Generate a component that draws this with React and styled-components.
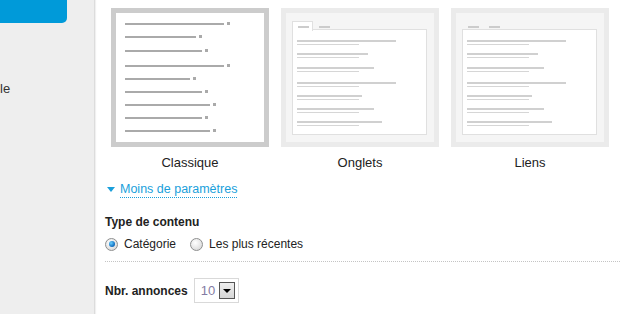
import styled, { createGlobalStyle } from "styled-components";

const Global = createGlobalStyle`
  html, body { margin: 0; padding: 0; background: #fff; }
  body { font-family: "Liberation Sans", Arial, sans-serif; font-size: 13px; color: #222; }
`

const Page = styled.div`
  display: flex;
  width: 620px;
  height: 314px;
  overflow: hidden;
`

const Sidebar = styled.aside`
  width: 94px;
  flex-shrink: 0;
  background: #eeeeee;
  border-right: 1px solid #dcdcdc;
  box-shadow: 1px 0 1px rgba(0, 0, 0, 0.06);
  display: flex;
  flex-direction: column;
`

const BlueButton = styled.div`
  width: 67px;
  height: 23px;
  background: #009ad9;
  border-radius: 0 0 5px 0;
`

const SideItem = styled.div`
  margin-top: 58px;
  line-height: 16px;
  font-size: 13px;
  color: #333;
`

const Main = styled.main`
  flex: 1;
  padding: 8px 0 0 10px;
`

const Layouts = styled.div`
  display: flex;
  gap: 12px;
  margin-left: 6px;
`

const Choice = styled.div`
  display: flex;
  flex-direction: column;
  align-items: center;
  width: 158px;
`

const Label = styled.div`
  margin-top: 8px;
  line-height: 16px;
`

const ClassicBox = styled.div`
  box-sizing: border-box;
  width: 158px;
  height: 139px;
  border: 5px solid #cccccc;
  background: #fff;
  padding: 9px 0 0 9px;
  display: flex;
  flex-direction: column;
`

const ClassicRow = styled.div`
  display: flex;
  align-items: center;
  gap: 3px;
  height: 3px;
  margin-top: ${p => p.$top}px;
`

const Bar = styled.span`
  display: block;
  height: ${p => p.$h || 2}px;
  width: ${p => p.$w}px;
  background: ${p => p.$c || "#aaaaaa"};
`

const Dot = styled.span`
  display: block;
  width: 3px;
  height: 3px;
  background: #aaaaaa;
`

const SoftBox = styled.div`
  box-sizing: border-box;
  width: 158px;
  height: 139px;
  border: 5px solid #ebebeb;
  background: #f5f5f5;
  padding: 8px 7px 7px 6px;
  display: flex;
  flex-direction: column;
`

const Tabs = styled.div`
  display: flex;
  height: 9px;
  margin-bottom: -1px;
  position: relative;
`

const Tab = styled.div`
  box-sizing: border-box;
  width: 21px;
  height: 10px;
  padding: 4px 0 0 5px;
  background: ${p => (p.$active ? "#fff" : "transparent")};
  border: 1px solid ${p => (p.$active ? "#e0e0e0" : "transparent")};
  border-bottom: none;
`

const Panel = styled.div`
  flex: 1;
  background: #fff;
  border: 1px solid #e0e0e0;
  padding: 10px 0 0 4px;
  display: flex;
  flex-direction: column;
`

const Item = styled.div`
  display: flex;
  flex-direction: column;
  gap: 2px;
  margin-top: ${p => p.$top}px;
`

const Options = styled.div`
  margin-top: 10px;
  display: flex;
  flex-direction: column;
  font-size: 12px;
`

const Toggle = styled.a`
  display: flex;
  align-items: center;
  gap: 5px;
  align-self: flex-start;
  margin-left: 2px;
  color: #1a9fdb;
  text-decoration: none;
  line-height: 16px;
  font-size: 12.5px;
  cursor: pointer;
  span {
    border-bottom: 1px dotted #1a9fdb;
  }
`

const Caret = styled.i`
  width: 0;
  height: 0;
  border-left: 4px solid transparent;
  border-right: 4px solid transparent;
  border-top: 5px solid #1a9fdb;
`

const Section = styled.div`
  margin-top: 16px;
  padding-bottom: 9px;
  border-bottom: 1px dotted #c4c4c4;
`

const Title = styled.div`
  font-weight: bold;
  line-height: 16px;
`

const RadioRow = styled.div`
  display: flex;
  align-items: center;
  gap: 14px;
  margin-top: 6px;
`

const RadioLabel = styled.label`
  display: flex;
  align-items: center;
  gap: 6px;
  line-height: 16px;
`

const Radio = styled.span`
  box-sizing: border-box;
  width: 13px;
  height: 13px;
  border-radius: 50%;
  border: 1px solid #8e8f8f;
  background: radial-gradient(circle at 40% 35%, #ffffff 0%, #e6e6e6 55%, #cfcfcf 100%);
  display: flex;
  align-items: center;
  justify-content: center;
  &::after {
    content: "";
    display: ${p => (p.$checked ? "block" : "none")};
    width: 6px;
    height: 6px;
    border-radius: 50%;
    background: radial-gradient(circle at 35% 35%, #6ad0ff 0%, #1877c6 60%, #0b4f95 100%);
  }
`

const Row = styled.div`
  display: flex;
  align-items: center;
  gap: 6px;
  margin-top: 16px;
  padding-bottom: 11px;
  border-bottom: 1px dotted #c4c4c4;
`

const Select = styled.div`
  box-sizing: border-box;
  width: 45px;
  height: 25px;
  border: 1px solid #d9d9d9;
  display: flex;
  align-items: center;
  justify-content: space-between;
  padding: 0 3px 0 6px;
  font-size: 13px;
  color: #837ba3;
`

const SelectBtn = styled.span`
  box-sizing: border-box;
  width: 16px;
  height: 17px;
  border: 1px solid #555;
  background: linear-gradient(#eeeeee, #d6d6d6);
  display: flex;
  align-items: center;
  justify-content: center;
  &::after {
    content: "";
    border-left: 4px solid transparent;
    border-right: 4px solid transparent;
    border-top: 4px solid #000;
  }
`

const classicRows = [
  { w: 99, top: 0 }, { w: 71, top: 10 }, { w: 77, top: 11 },
  { w: 99, top: 12 }, { w: 65, top: 10 }, { w: 77, top: 10 },
  { w: 85, top: 10 }, { w: 77, top: 10 }, { w: 85, top: 10 },
]

const items = [
  { w: 99, top: 0 }, { w: 71, top: 8 }, { w: 77, top: 9 },
  { w: 99, top: 10 }, { w: 65, top: 8 }, { w: 77, top: 8 }, { w: 85, top: 8 },
]

const SoftThumb = ({ tabbed }) => (
  <SoftBox>
    <Tabs>
      <Tab $active={tabbed}><Bar $w={11} $c="#cccccc" /></Tab>
      <Tab><Bar $w={11} $c="#cccccc" /></Tab>
    </Tabs>
    <Panel>
      {items.map((it, i) => (
        <Item key={i} $top={it.top}>
          <Bar $w={it.w} $c="#d0d0d0" />
          <Bar $w={62} $h={1} $c="#d6d6d6" />
        </Item>
      ))}
    </Panel>
  </SoftBox>
)

export default function App() {
  return (
    <>
      <Global />
      <Page>
        <Sidebar>
          <BlueButton />
          <SideItem>le</SideItem>
        </Sidebar>
        <Main>
          <Layouts>
            <Choice>
              <ClassicBox>
                {classicRows.map((r, i) => (
                  <ClassicRow key={i} $top={r.top}>
                    <Bar $w={r.w} />
                    <Dot />
                  </ClassicRow>
                ))}
              </ClassicBox>
              <Label>Classique</Label>
            </Choice>
            <Choice>
              <SoftThumb tabbed />
              <Label>Onglets</Label>
            </Choice>
            <Choice>
              <SoftThumb />
              <Label>Liens</Label>
            </Choice>
          </Layouts>
          <Options>
            <Toggle><Caret /><span>Moins de paramètres</span></Toggle>
            <Section>
              <Title>Type de contenu</Title>
              <RadioRow>
                <RadioLabel><Radio $checked />Catégorie</RadioLabel>
                <RadioLabel><Radio />Les plus récentes</RadioLabel>
              </RadioRow>
            </Section>
            <Row>
              <Title>Nbr. annonces</Title>
              <Select>10<SelectBtn /></Select>
            </Row>
          </Options>
        </Main>
      </Page>
    </>
  )
}
